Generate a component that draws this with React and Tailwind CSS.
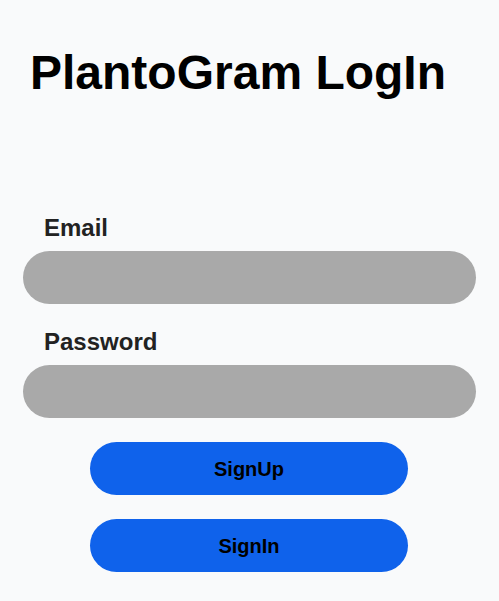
export default function App() {
  return (
    <div className="min-h-screen bg-[#f9fafb] px-[23px] font-['Liberation_Sans',Arial,sans-serif]">
      <h1 className="pt-[49px] pl-[7px] text-5xl leading-[48px] font-bold text-black">PlantoGram LogIn</h1>
      <form className="mt-[115px] flex flex-col" onSubmit={(e) => e.preventDefault()}>
        <label className="pl-[21px] text-2xl leading-8 font-bold text-[#222]">Email</label>
        <input type="email" className="mt-[7px] h-[53px] w-full rounded-full bg-[#a9a9a9] px-5 outline-none" />
        <label className="mt-[22px] pl-[21px] text-2xl leading-8 font-bold text-[#222]">Password</label>
        <input type="password" className="mt-[7px] h-[53px] w-full rounded-full bg-[#a9a9a9] px-5 outline-none" />
        <div className="mt-[24px] flex flex-col items-center gap-[24px]">
          <button className="ml-[-1px] h-[53px] w-[318px] rounded-full bg-[#0f62eb] text-xl font-bold text-black">SignUp</button>
          <button className="ml-[-1px] h-[53px] w-[318px] rounded-full bg-[#0f62eb] text-xl font-bold text-black">SignIn</button>
        </div>
      </form>
    </div>
  );
}
